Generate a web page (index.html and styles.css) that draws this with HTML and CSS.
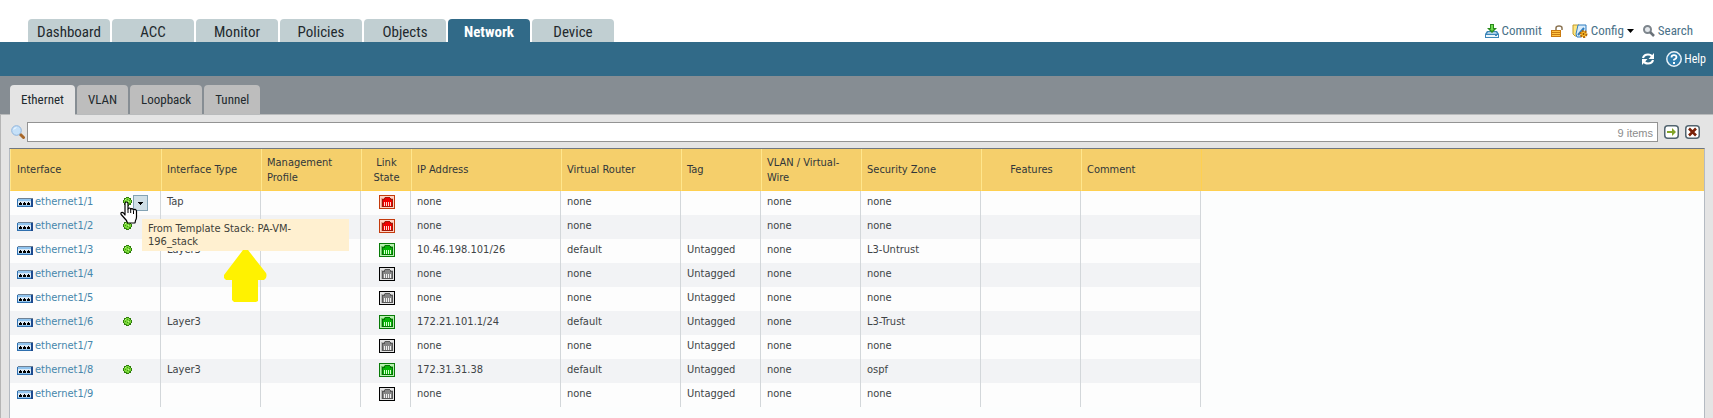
FILE: index.html
```html
<!DOCTYPE html>
<html lang="en">
<head>
<meta charset="utf-8">
<title>Network - Interfaces</title>
<link rel="stylesheet" href="styles.css">
</head>
<body>
<svg class="defs" width="0" height="0" aria-hidden="true">
  <symbol id="nic" viewBox="0 0 16 9">
    <path fill="#dbe9f5" d="M0 0h16v9H0z"/>
    <path fill="#6f8296" d="M1 0h15v1H1z"/>
    <path fill="#2f6fae" d="M0 1h1v8H0zM0 8h16v1H0z"/>
    <path fill="#1d4a8f" d="M14 1h2v8h-2z"/>
    <path fill="#8fc3ee" d="M1 1h13v2H1zM1 7h13v1H1z"/>
    <path fill="#000" d="M3 4h1v1h1v2H2V5h1zM7 4h1v1h1v2H6V5h1zM11 4h1v1h1v2h-3V5h1z"/>
  </symbol>
  <symbol id="dot" viewBox="0 0 9 9">
    <path fill="#2f7d0b" d="M3 0h3v1h2v2h1v3H8v2H6v1H3V8H1V6H0V3h1V1h2z"/>
    <path fill="#7bd83a" d="M3 1h3v1h1v1h1v3H7v1H6v1H3V7H2V6H1V3h1V2h1z"/>
    <path fill="#3f9a14" d="M4 2h1v1H4zM2 4h1v1H2zM6 3h1v1H6zM4 5h1v1H4zM6 6h1v1H6zM3 7h1v1H3z"/>
    <path fill="#c0f48c" d="M2 2h1v1H2zM5 4h1v1H5z"/>
  </symbol>
  <symbol id="port" viewBox="0 0 16 14">
    <path class="p-edge" d="M0 0h16v14H0z"/>
    <path class="p-pale" d="M1 1h14v12H1z"/>
    <path class="p-mid" d="M2 3h3v-1h6v1h3v9H2z"/>
    <path class="p-dark" d="M3 4h2V3h1V2h5v1h1v1h2v8H3z"/>
    <path class="p-fill" d="M4 5h2V3h5v2h2v6H4z"/>
    <path class="p-pin" d="M5 7h1v4H5zM7 7h1v4H7zM9 7h1v4H9zM11 7h1v4h-1z"/>
  </symbol>
</svg>

<header class="top">
  <nav class="tabs">
    <a href="#">Dashboard</a>
    <a href="#">ACC</a>
    <a href="#">Monitor</a>
    <a href="#">Policies</a>
    <a href="#">Objects</a>
    <a href="#" class="on">Network</a>
    <a href="#">Device</a>
  </nav>
  <div class="tools">
    <a href="#" class="commit"><svg width="14" height="14" viewBox="0 0 14 14"><path fill="#3d86b8" d="M2 7h10l2 3v4H0v-4z"/><path fill="#a9cde6" d="M3 8h8l1 2H2z"/><path fill="#eef6fb" d="M1 11h12v2H1z"/><path fill="#3d86b8" d="M10 11h2v1h-2z"/><path fill="#2a8a1c" d="M5 0h4v4h3L7 9 2 4h3z"/><path fill="#6fdc50" d="M6 1h2v4h1L7 7 5 5h1z"/></svg>Commit</a>
    <button type="button" class="lock" aria-label="Locks"><svg width="12" height="12" viewBox="0 0 12 12"><path fill="none" stroke="#8b7452" stroke-width="1.500" d="M5 5V3q0-2 3-2t3 2v2"/><path fill="#c97a10" d="M0 5h10v7H0z"/><path fill="#ffc340" d="M1 6h8v1H1zM1 8h8v1H1zM1 10h8v1H1z"/></svg></button>
    <a href="#" class="config"><svg width="16" height="14" viewBox="0 0 16 14"><path fill="#ffe680" stroke="#c39a2a" d="M1 1h6l2 2v9H3l-2-2z"/><path fill="#d8ecfb" stroke="#2f7dc0" d="M6 1h8v6l-5 6H5l-1-3z"/><path stroke="#2f7dc0" stroke-width="2" d="M6 11l6-7"/><circle cx="11.500" cy="10" r="3" fill="#ffc02a" stroke="#b56a08" stroke-width="2" stroke-dasharray="2 1"/><circle cx="11.500" cy="10" r="1" fill="#8a4c05"/></svg>Config<svg class="caret" width="7" height="4" viewBox="0 0 7 4"><path d="M0 0h7L3.500 4z"/></svg></a>
    <a href="#"><svg width="12" height="12" viewBox="0 0 12 12"><circle cx="4.500" cy="4.500" r="3.500" fill="#e4e8ec" stroke="#7d858c" stroke-width="2"/><path stroke="#6a7178" stroke-width="2.500" d="M7 7l4 4"/></svg>Search</a>
  </div>
</header>

<div class="bar">
  <button type="button" aria-label="Refresh"><svg width="14" height="12" viewBox="0 0 14 12"><path fill="none" stroke="#fff" stroke-width="2.200" d="M2 5q1-3.500 5-3.500 3 0 4 2M12 7q-1 3.500-5 3.500-3 0-4-2"/><path fill="#fff" d="M13 0v6H7.500zM1 12V6h5.500z"/></svg></button>
  <a href="#"><svg width="16" height="16" viewBox="0 0 16 16"><circle cx="8" cy="8" r="7.200" fill="#2f7cab" stroke="#e9f2f8" stroke-width="1.500"/><path fill="none" stroke="#fff" stroke-width="1.800" d="M5.500 6.500Q5.500 4.200 8 4.200t2.500 2Q10.500 7.300 8 8.800V9.500"/><path fill="#fff" d="M7 11h2v2H7z"/></svg>Help</a>
</div>

<nav class="subtabs">
  <a href="#" class="on">Ethernet</a>
  <a href="#">VLAN</a>
  <a href="#">Loopback</a>
  <a href="#">Tunnel</a>
</nav>

<main class="page">
  <form class="filter">
    <label for="q" aria-label="Filter"><svg width="14" height="14" viewBox="0 0 14 14"><path stroke="#a8682a" stroke-width="3" stroke-linecap="round" d="M9.500 9.500l3 3"/><circle cx="5.500" cy="5.500" r="4.800" fill="#c5e0f8" stroke="#8fb4dc"/><path fill="#e9f5ff" d="M2 5q1-3 4-3-1 2-4 3z"/></svg></label>
    <div class="box"><input id="q" type="text"><span>9 items</span></div>
    <button type="button" aria-label="Apply filter"><svg width="15" height="14" viewBox="0 0 15 14"><rect x="0.750" y="0.750" width="13.500" height="12.500" rx="3" fill="#fff" stroke="#52646f" stroke-width="1.500"/><path fill="#83a428" d="M3 6h5V3l4 4-4 4V8H3z"/></svg></button>
    <button type="button" aria-label="Clear filter"><svg width="15" height="14" viewBox="0 0 15 14"><rect x="0.750" y="0.750" width="13.500" height="12.500" rx="3" fill="#fff" stroke="#52646f" stroke-width="1.500"/><path stroke="#7a2108" stroke-width="2.600" d="M4 3.500l7 7M11 3.500l-7 7"/></svg></button>
  </form>

  <div class="grid">
    <table>
      <colgroup><col class="w151"><col class="w100"><col class="w100"><col class="w50"><col class="w150"><col class="w120"><col class="w80"><col class="w100"><col class="w120"><col class="w100"><col class="w120"><col></colgroup>
      <thead>
        <tr><th>Interface</th><th>Interface Type</th><th>Management Profile</th><th class="mid">Link State</th><th>IP Address</th><th>Virtual Router</th><th>Tag</th><th>VLAN / Virtual-Wire</th><th>Security Zone</th><th class="mid">Features</th><th>Comment</th><th class="rest"></th></tr>
      </thead>
      <tbody>
        <tr><td><div class="if"><a href="#"><svg class="nic"><use href="#nic"/></svg>ethernet1/1</a><svg class="dot"><use href="#dot"/></svg><button type="button" class="drop" aria-label="Template options"><svg width="5" height="3" viewBox="0 0 5 3"><path d="M0 0h5v1H4v1H3v1H2V2H1V1H0z"/></svg></button>
          <div class="tip" role="tooltip">From Template Stack: PA-VM-196_stack</div>
          <svg class="arrow" width="43" height="54" viewBox="0 0 43 54"><path fill="#fff200" d="M19 1h5l18 23q1 2 0 5l-2 2h-6v21l-2 1H10l-2-2V31H2l-2-2v-3z"/></svg>
          <svg class="hand" width="18" height="23" viewBox="0 0 18 23"><path fill="#fff" stroke="#000" stroke-width="1.200" stroke-linejoin="round" d="M5 14V2.500q0-1.500 1.500-1.500T8 2.500V8q0-1 1.300-1t1.400 1.500Q11 7.500 12 7.600t1.500 1.600q.6-1 1.600-.8T16.500 10v6q0 2-1 3.500l-.5 2.500H7.500l-1-2.500L1.200 13.500Q.5 12 1.500 11.500t2 .5z"/><path stroke="#000" d="M8 8v4M10.700 9v3M13.500 10v3"/></svg>
        </div></td><td>Tap</td><td></td><td class="mid"><svg class="port red"><use href="#port"/></svg></td><td>none</td><td>none</td><td></td><td>none</td><td>none</td><td></td><td></td><td class="rest"></td></tr>
        <tr><td><div class="if"><a href="#"><svg class="nic"><use href="#nic"/></svg>ethernet1/2</a><svg class="dot"><use href="#dot"/></svg></div></td><td></td><td></td><td class="mid"><svg class="port red"><use href="#port"/></svg></td><td>none</td><td>none</td><td></td><td>none</td><td>none</td><td></td><td></td><td class="rest"></td></tr>
        <tr><td><div class="if"><a href="#"><svg class="nic"><use href="#nic"/></svg>ethernet1/3</a><svg class="dot"><use href="#dot"/></svg></div></td><td>Layer3</td><td></td><td class="mid"><svg class="port green"><use href="#port"/></svg></td><td>10.46.198.101/26</td><td>default</td><td>Untagged</td><td>none</td><td>L3-Untrust</td><td></td><td></td><td class="rest"></td></tr>
        <tr><td><div class="if"><a href="#"><svg class="nic"><use href="#nic"/></svg>ethernet1/4</a></div></td><td></td><td></td><td class="mid"><svg class="port gray"><use href="#port"/></svg></td><td>none</td><td>none</td><td>Untagged</td><td>none</td><td>none</td><td></td><td></td><td class="rest"></td></tr>
        <tr><td><div class="if"><a href="#"><svg class="nic"><use href="#nic"/></svg>ethernet1/5</a></div></td><td></td><td></td><td class="mid"><svg class="port gray"><use href="#port"/></svg></td><td>none</td><td>none</td><td>Untagged</td><td>none</td><td>none</td><td></td><td></td><td class="rest"></td></tr>
        <tr><td><div class="if"><a href="#"><svg class="nic"><use href="#nic"/></svg>ethernet1/6</a><svg class="dot"><use href="#dot"/></svg></div></td><td>Layer3</td><td></td><td class="mid"><svg class="port green"><use href="#port"/></svg></td><td>172.21.101.1/24</td><td>default</td><td>Untagged</td><td>none</td><td>L3-Trust</td><td></td><td></td><td class="rest"></td></tr>
        <tr><td><div class="if"><a href="#"><svg class="nic"><use href="#nic"/></svg>ethernet1/7</a></div></td><td></td><td></td><td class="mid"><svg class="port gray"><use href="#port"/></svg></td><td>none</td><td>none</td><td>Untagged</td><td>none</td><td>none</td><td></td><td></td><td class="rest"></td></tr>
        <tr><td><div class="if"><a href="#"><svg class="nic"><use href="#nic"/></svg>ethernet1/8</a><svg class="dot"><use href="#dot"/></svg></div></td><td>Layer3</td><td></td><td class="mid"><svg class="port green"><use href="#port"/></svg></td><td>172.31.31.38</td><td>default</td><td>Untagged</td><td>none</td><td>ospf</td><td></td><td></td><td class="rest"></td></tr>
        <tr><td><div class="if"><a href="#"><svg class="nic"><use href="#nic"/></svg>ethernet1/9</a></div></td><td></td><td></td><td class="mid"><svg class="port gray"><use href="#port"/></svg></td><td>none</td><td>none</td><td>Untagged</td><td>none</td><td>none</td><td></td><td></td><td class="rest"></td></tr>
      </tbody>
    </table>
  </div>
</main>
</body>
</html>
```
FILE: styles.css
```css
* { box-sizing: border-box; }
html { height: 100%; }
body {
  display: flex;
  flex-direction: column;
  min-height: 100%;
  margin: 0;
  background: #fff;
  color: #404447;
  font: 11px/14px "DejaVu Sans Condensed", Tahoma, "DejaVu Sans", sans-serif;
}
a { text-decoration: none; }
svg { display: block; flex: none; }
button {
  display: flex;
  align-items: center;
  justify-content: center;
  padding: 0;
  border: 0;
  background: none;
}
.defs { position: absolute; }

.top {
  display: flex;
  justify-content: space-between;
  align-items: flex-end;
  padding: 19px 20px 0 28px;
}
.tabs { display: flex; gap: 2px; }
.tabs a {
  width: 82px;
  height: 23px;
  border-radius: 4px 4px 0 0;
  background: #c1cfd2;
  color: #22292d;
  font: 15px/26px "Liberation Sans Narrow", "Roboto Condensed", sans-serif;
  text-align: center;
}
.tabs .on { background: #316a88; color: #fff; font-weight: bold; }
.tools, .tools a, .bar, .bar a { display: flex; align-items: center; }
.tools { gap: 9px; height: 23px; }
.tools a {
  gap: 3px;
  color: #4a7188;
  font: 13px/20px "Liberation Sans Narrow", "Roboto Condensed", sans-serif;
}
.bar {
  justify-content: flex-end;
  gap: 11px;
  height: 34px;
  padding-right: 7px;
  background: #316a88;
}
.bar a {
  gap: 2px;
  color: #fff;
  font: 12px/20px "Liberation Sans Narrow", "Roboto Condensed", sans-serif;
}

.subtabs {
  display: flex;
  gap: 2px;
  height: 38px;
  padding: 9px 10px 0;
  background: #868d93;
}
.subtabs a {
  height: 29px;
  padding: 0 11px;
  border-radius: 4px 4px 0 0;
  background: #bdbdbd;
  color: #22292d;
  font: 13px/29px "Liberation Sans Narrow", "Roboto Condensed", sans-serif;
}
.subtabs .on { height: 30px; background: #e4e4e4; z-index: 1; }

.page {
  display: flex;
  flex: 1;
  flex-direction: column;
  padding: 7px 8px 0;
  border-top: 1px solid #b9bbbc;
  border-left: 1px solid #b5b5b5;
  background: #e4e4e4;
}
.filter { display: flex; align-items: center; margin: 0 5px 6px 2px; }
.filter label { width: 16px; }
.filter button { margin-left: 6px; }
.filter .box {
  display: flex;
  flex: 1;
  align-items: center;
  height: 20px;
  padding: 1px 4px 0 0;
  border: 1px solid #939393;
  background: #fff;
  color: #8c8c8c;
  font: 11px/18px "Liberation Sans", Arial, sans-serif;
}
.filter input { flex: 1; min-width: 0; border: 0; background: none; outline: 0; }

.grid {
  flex: 1;
  border: 1px solid #b4bac2;
  border-top-color: #6f7680;
  border-bottom: 0;
  background: #fcfdfd;
}
table { width: 100%; table-layout: fixed; border-collapse: separate; border-spacing: 0; }
.w50 { width: 50px; }
.w80 { width: 80px; }
.w100 { width: 100px; }
.w120 { width: 120px; }
.w150 { width: 150px; }
.w151 { width: 151px; }
th {
  height: 42px;
  padding: 0 5px;
  border-left: 1px solid #ffe68c;
  border-bottom: 1px solid #ffd050;
  background: #f5cf6b;
  color: #30363a;
  font-weight: normal;
  line-height: 15px;
  text-align: left;
}
th:first-child { padding-left: 6px; }
th.mid { text-align: center; }
th.rest { border-left-color: #ffd050; }
td {
  height: 24px;
  padding: 4px 6px 0;
  border-right: 1px solid #d3d7da;
  background: #fdfdfd;
  vertical-align: top;
  white-space: nowrap;
}
tr:nth-child(even) td { background: #f2f3f5; }
tr td.rest { border: 0; background: #fcfdfd; }
td:first-child { padding-left: 7px; }
td.mid { padding: 4px 14px 0 18px; }

.if { position: relative; display: flex; }
.if a { display: flex; align-items: center; gap: 2px; width: 106px; color: #4787ac; }
.nic { width: 16px; height: 9px; }
.dot { width: 9px; height: 9px; margin: 2px 0; }
.drop {
  width: 15px;
  height: 16px;
  margin: 0 0 -2px 1px;
  border: 1px solid #82a2b4;
  background: #d0dfe6;
}
.tip {
  position: absolute;
  left: 125px;
  top: 24px;
  z-index: 1;
  width: 207px;
  padding: 3px 50px 3px 6px;
  background: #fff0d0;
  color: #404038;
  line-height: 13px;
  white-space: normal;
}
.arrow { position: absolute; left: 207px; top: 54px; z-index: 2; }
.hand { position: absolute; left: 103px; top: 6px; z-index: 3; }

.port { width: 16px; height: 14px; }
.p-edge { fill: var(--edge); }
.p-pale { fill: var(--pale); }
.p-mid { fill: var(--mid); }
.p-dark { fill: var(--dark); }
.p-fill { fill: var(--fill); }
.p-pin { fill: var(--pin); }
.red { --edge: #c43a0c; --pale: #ffd3c4; --mid: #e8a08c; --dark: #a01808; --fill: #ee0000; --pin: #ffd8cc; }
.green { --edge: #087a08; --pale: #b8f0b0; --mid: #70c868; --dark: #067006; --fill: #06b406; --pin: #d8ffd0; }
.gray { --edge: #000; --pale: #e4e4e4; --mid: #b8b8b8; --dark: #585858; --fill: #868686; --pin: #f0f0f0; }
```
